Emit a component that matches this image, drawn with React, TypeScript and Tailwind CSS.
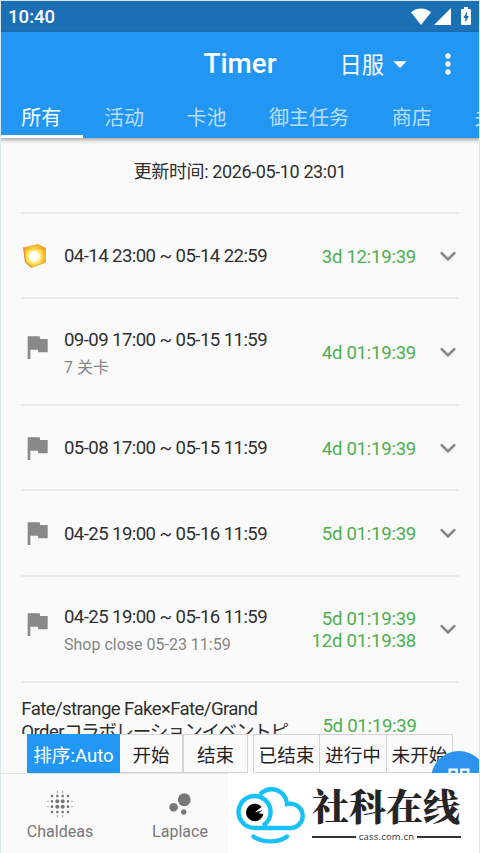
import type { ReactNode } from "react";
import {
  MdArrowDropDown,
  MdBlurOn,
  MdBubbleChart,
  MdExpandMore,
  MdFlag,
  MdMoreVert,
  MdOutlineGridView,
} from "react-icons/md";
import { clsx } from "clsx";

interface TimerRowProps {
  icon: ReactNode;
  title: string;
  subtitle?: string;
  remaining: string[];
}

const tabs = ["所有", "活动", "卡池", "御主任务", "商店", "关卡"];

const flag = <MdFlag className="size-8 text-[#888888]" />;

const rows: TimerRowProps[] = [
  { icon: <QuartzIcon />, title: "04-14 23:00 ~ 05-14 22:59", remaining: ["3d 12:19:39"] },
  { icon: flag, title: "09-09 17:00 ~ 05-15 11:59", subtitle: "7 关卡", remaining: ["4d 01:19:39"] },
  { icon: flag, title: "05-08 17:00 ~ 05-15 11:59", remaining: ["4d 01:19:39"] },
  { icon: flag, title: "04-25 19:00 ~ 05-16 11:59", remaining: ["5d 01:19:39"] },
  {
    icon: flag,
    title: "04-25 19:00 ~ 05-16 11:59",
    subtitle: "Shop close 05-23 11:59",
    remaining: ["5d 01:19:39", "12d 01:19:38"],
  },
];

function QuartzIcon() {
  return (
    <svg viewBox="0 0 24 24" className="ml-px size-6">
      <defs>
        <radialGradient id="glow" cx="0.48" cy="0.52" r="0.56">
          <stop offset="0.12" stopColor="#ffffff" />
          <stop offset="0.34" stopColor="#fffde6" />
          <stop offset="0.6" stopColor="#fde04a" />
          <stop offset="1" stopColor="#ee9a20" />
        </radialGradient>
      </defs>
      <path
        d="M1.700 3.700 16 .500 23.700 4.300 23.500 18.300 9.400 23.500 3.500 17.700z"
        fill="url(#glow)"
        stroke="#f0a828"
        strokeWidth="0.800"
        strokeLinejoin="round"
      />
      <path d="M1.700 3.700 3.500 17.700 9.400 23.500" fill="none" stroke="#e07a2c" strokeWidth="1.200" opacity="0.7" />
      <path d="M1.700 3.700 9 5.500 23.700 4.300" fill="none" stroke="#ea8a1e" strokeWidth="1" opacity="0.35" />
      <circle cx="12" cy="12.500" r="4.500" fill="#ffffff" opacity="0.8" />
    </svg>
  );
}

function StatusBar() {
  return (
    <div className="flex h-8 shrink-0 items-center justify-between bg-[#1a6fb5] pr-[9px] pl-2 text-white">
      <span className="pt-[3px] text-[18.6px] font-medium">10:40</span>
      <div className="flex items-center">
        <svg viewBox="0 0 20 17" className="h-[17px] w-5" fill="currentColor">
          <path d="M10 17 0 4.300C2.700 1.800 6.100.500 10 .500s7.300 1.300 10 3.800z" />
        </svg>
        <svg viewBox="0 0 17 17" className="ml-[3px] size-[17px]" fill="currentColor">
          <path d="M17 0v17H0z" />
        </svg>
        <svg viewBox="0 0 10 18" className="ml-2.5 h-[18px] w-2.5">
          <path d="M3 0h4v2h2a1 1 0 0 1 1 1v14a1 1 0 0 1-1 1H1a1 1 0 0 1-1-1V3a1 1 0 0 1 1-1h2z" fill="#fff" />
          <path d="M6 4.500 2.300 11H4.400v4.500L7.900 9H6z" fill="#1a6fb5" />
        </svg>
      </div>
    </div>
  );
}

function AppBar() {
  return (
    <header className="z-10 shrink-0 bg-[#2196f3] text-white shadow-[0_2px_4px_rgba(0,0,0,0.35)]">
      <div className="grid h-16 grid-cols-[1fr_auto_1fr] items-center">
        <h1 className="col-start-2 text-[27.8px] font-medium">Timer</h1>
        <div className="flex items-center justify-end pr-4">
          <span className="pt-1 text-[22.3px]">日服</span>
          <MdArrowDropDown className="size-8" />
          <MdMoreVert className="ml-4 size-8" />
        </div>
      </div>
      <nav className="flex h-[42px] overflow-hidden">
        {tabs.map((tab, i) => (
          <div
            key={tab}
            className={clsx(
              "shrink-0 border-b-[3px] px-[21.3px] text-[20px] leading-[44px] whitespace-nowrap",
              i === 0 ? "border-white" : "border-transparent text-white/70"
            )}
          >
            {tab}
          </div>
        ))}
      </nav>
    </header>
  );
}

function TimerRow({ icon, title, subtitle, remaining }: TimerRowProps) {
  return (
    <div
      className={clsx(
        "mx-[21.3px] flex shrink-0 items-center border-t-2 border-[#e9e9e9]",
        subtitle ? "h-[106.6px]" : "h-[85.3px]"
      )}
    >
      <div className={clsx("w-[42.7px]", subtitle && "mb-2.5")}>{icon}</div>
      <div className={clsx("flex-1", subtitle ? "pt-[5px]" : "pt-0.5")}>
        <p className="text-[18.6px] leading-[27px] tracking-[-0.58px] text-[#2f2f2f]">{title}</p>
        {subtitle && <p className="text-[16px] leading-[27px] text-[#858585]">{subtitle}</p>}
      </div>
      <div className="pt-1 text-right text-[18.6px] leading-[21.5px] tracking-[-0.27px] text-[#4caf50]">
        {remaining.map((time) => (
          <p key={time}>{time}</p>
        ))}
      </div>
      <MdExpandMore className="-mr-[5.3px] ml-4 size-8 text-[#888888]" />
    </div>
  );
}

function FilterBar() {
  return (
    <div className="flex h-[39px] shrink-0 gap-[5px] pl-[27px] text-[18.6px] leading-[43px] text-[#1f1f1f]">
      <div className="flex border border-[#d4d4d4] text-center">
        <span className="-my-px -ml-px w-[93px] bg-[#2196f3] leading-[45px] text-white">排序:Auto</span>
        <span className="w-16 border-r-2 border-[#d4d4d4]">开始</span>
        <span className="w-[63px]">结束</span>
      </div>
      <div className="flex border border-[#d4d4d4] text-center">
        <span className="w-[66px] border-r border-[#d4d4d4]">已结束</span>
        <span className="w-[67px] border-r border-[#d4d4d4]">进行中</span>
        <span className="w-[65px]">未开始</span>
      </div>
    </div>
  );
}

function BottomNav() {
  return (
    <footer className="z-10 flex h-20 shrink-0 border-t border-[#e4e4e4] bg-[#fafafa] text-[16px] text-[#777777]">
      <div className="flex w-[120px] flex-col items-center pt-3.5">
        <MdBlurOn className="size-8" />
        <span className="leading-6">Chaldeas</span>
      </div>
      <div className="flex w-[120px] flex-col items-center pt-3.5">
        <MdBubbleChart className="size-8" />
        <span className="leading-6">Laplace</span>
      </div>
    </footer>
  );
}

function SiteBadge() {
  return (
    <div className="absolute right-0 bottom-0 z-10 flex h-20 w-[252px] bg-white">
      <svg viewBox="0 0 76 64" className="mt-3 ml-[6px] h-16 w-[76px] shrink-0" fill="none">
        <g stroke="#18c0f8" strokeWidth="4.400">
          <path d="M29 40.600A16 16 0 1 0 20.700 43H55A12.200 12.200 0 1 0 53 19.200C52.500 10.500 45.500 4.200 37.500 4.200c-4.500 0-8.500 2-11.500 5.200" />
          <path d="M19.500 51.500c8.500 6.500 25 6.500 33.500 0" strokeLinecap="round" />
        </g>
        <path d="M20.700 27.500 27.500 22A8.700 8.700 0 1 0 29.300 29l-4.800-.700 4-3z" fill="#000" />
      </svg>
      <div className="mt-2.5 ml-0.5 w-[149px]">
        <p className="text-[37px] leading-[44px] font-black whitespace-nowrap text-[#252525] [font-family:'Noto_Serif_CJK_SC','Noto_Sans_CJK_SC',serif]">
          社科在线
        </p>
        <div className="mt-px flex items-center gap-[3px] text-[#333333]">
          <span className="h-0.5 flex-1 bg-[#333333]" />
          <span className="text-[9.5px] leading-[18px] font-medium tracking-[0.2px] [font-family:'Open_Sans',sans-serif]">
            cass.com.cn
          </span>
          <span className="h-0.5 flex-1 bg-[#333333]" />
        </div>
      </div>
    </div>
  );
}

export default function App() {
  return (
    <div className="relative flex h-[853px] w-[480px] flex-col overflow-hidden bg-[#fafafa] [font-family:Roboto,'Noto_Sans_CJK_SC',sans-serif]">
      <StatusBar />
      <AppBar />

      {/* Timer list */}
      <main className="flex flex-1 flex-col overflow-hidden">
        <p className="h-[74.2px] shrink-0 text-center text-[18px] leading-[67px] tracking-[-0.38px] text-[#2f2f2f]">
          更新时间: 2026-05-10 23:01
        </p>
        {rows.map((row, i) => (
          <TimerRow key={i} {...row} />
        ))}
        <div className="mx-[21.3px] flex shrink-0 border-t-2 border-[#e9e9e9] pt-[15px]">
          <p className="text-[18.6px] leading-[23px] tracking-[-0.6px] text-[#2f2f2f]">
            Fate/strange Fake×Fate/Grand
            <br />
            Order<span className="tracking-[-1.35px]">コラボレーションイベントピ</span>
          </p>
          <p className="ml-auto pt-[17px] pr-[42px] text-[18.6px] leading-[23px] tracking-[-0.27px] text-[#4caf50]">
            5d 01:19:39
          </p>
        </div>
      </main>

      <FilterBar />
      <div className="absolute bottom-[46px] left-[431px] flex size-14 items-center justify-center rounded-full bg-[#2b93ee] text-white">
        <MdOutlineGridView className="size-7" />
      </div>
      <BottomNav />
      <SiteBadge />

      {/* Window frame */}
      <div className="pointer-events-none absolute inset-0 z-20 border border-b-0 border-[#d9e8ec]" />
    </div>
  );
}
